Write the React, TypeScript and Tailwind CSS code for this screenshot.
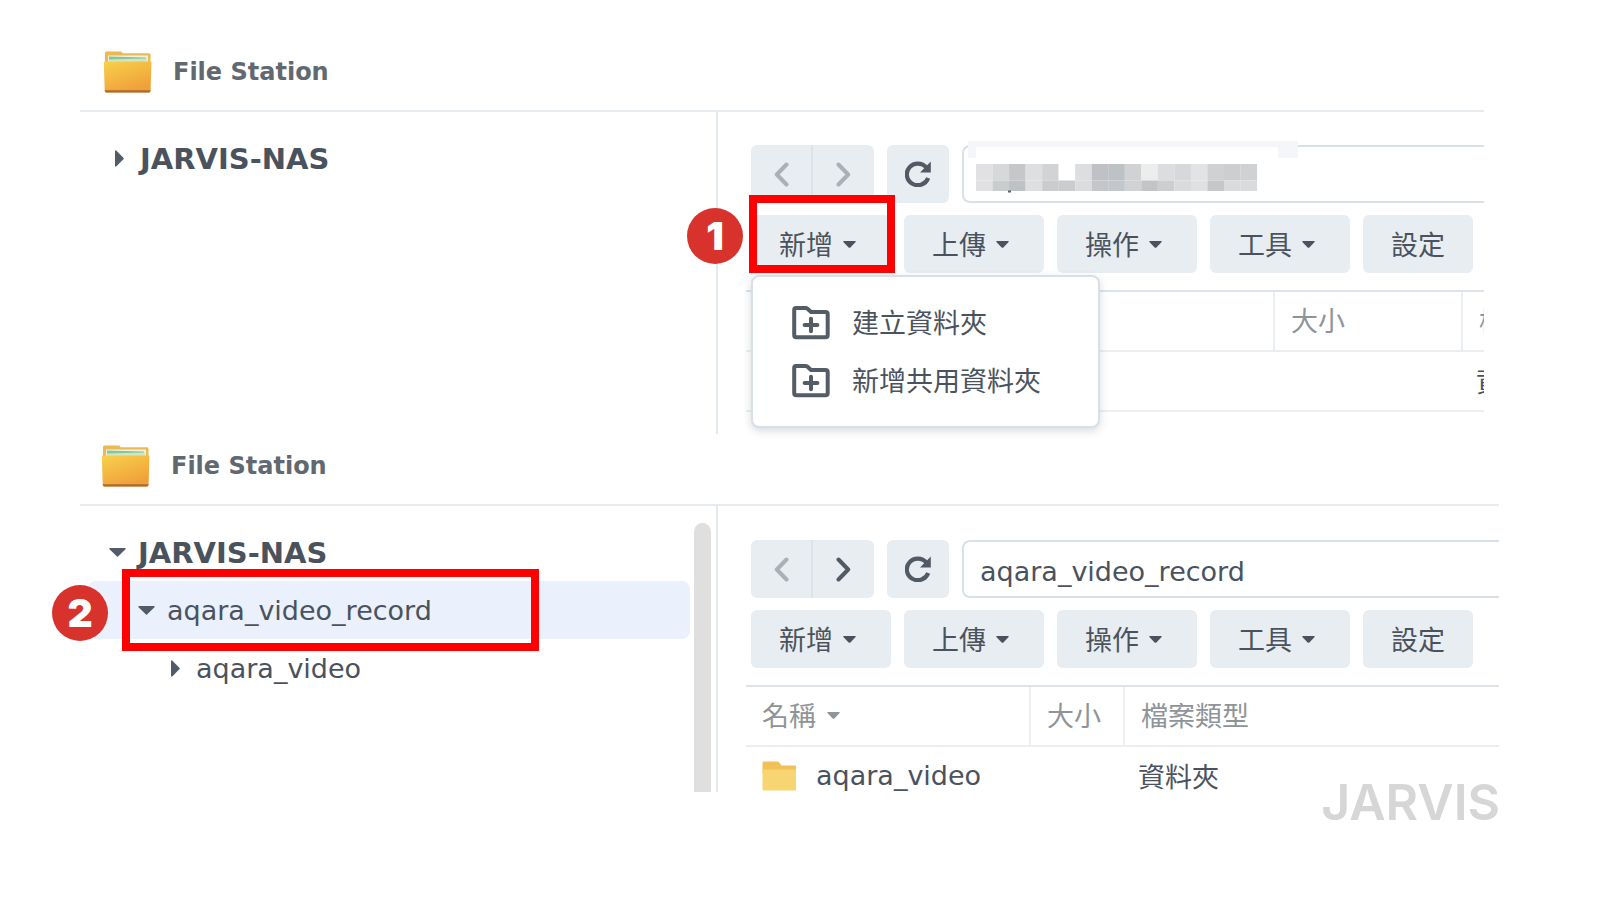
import type { ReactNode } from "react";

type CaretProps = { className?: string };

function CaretDown({ className = "" }: CaretProps) {
  return (
    <svg aria-hidden="true" viewBox="0 0 13 7" className={`h-[7px] w-[13px] shrink-0 ${className}`}>
      <path d="M0.8 0H12.2Q13.2 0.4 12.4 1.2L7.4 6.4Q6.5 7.2 5.6 6.4L0.6 1.2Q-0.2 0.4 0.8 0Z" fill="currentColor" />
    </svg>
  );
}

function TreeArrow({ open }: { open: boolean }) {
  return (
    <span className="flex w-[17px] shrink-0 justify-center text-[#525c66]">
      {open ? (
        <svg aria-hidden="true" viewBox="0 0 17 9" className="h-[9px] w-[17px]">
          <path d="M0.5 0H16.5V1.2L9 8.6Q8.5 9 8 8.6L0.5 1.2Z" fill="currentColor" />
        </svg>
      ) : (
        <svg aria-hidden="true" viewBox="0 0 9 17" className="h-[17px] w-[9px]">
          <path d="M0 0.5V16.5H1.2L8.6 9Q9 8.5 8.6 8L1.2 0.5Z" fill="currentColor" />
        </svg>
      )}
    </span>
  );
}

function Chevron({ direction }: { direction: "left" | "right" }) {
  return (
    <svg aria-hidden="true" viewBox="0 0 15 25" className="h-[25px] w-[15px]">
      <path
        d={direction === "left" ? "M12.5 2.5L2.8 12.5L12.5 22.5" : "M2.5 2.5L12.2 12.5L2.5 22.5"}
        fill="none"
        stroke="currentColor"
        strokeWidth="4"
        strokeLinecap="round"
        strokeLinejoin="round"
      />
    </svg>
  );
}

function RefreshIcon() {
  return (
    <svg aria-hidden="true" viewBox="0 0 26 26" className="size-[26px]">
      <path d="M23.2 17A11 10.8 0 1 1 21.4 6.6" fill="none" stroke="currentColor" strokeWidth="4.2" />
      <path d="M25.8 0.6V11.4H15Z" fill="currentColor" />
    </svg>
  );
}

function FolderPlusIcon() {
  return (
    <svg aria-hidden="true" viewBox="0 0 38 34" className="h-[34px] w-[38px] shrink-0 text-[#545d66]">
      <path
        d="M4 2H13.5Q14.6 2 15.5 2.8L19 6H33.5Q35.7 6 35.7 8.2V29Q35.7 31.3 33.5 31.3H4.4Q2.2 31.3 2.2 29V4Q2.2 2 4 2Z"
        fill="none"
        stroke="currentColor"
        strokeWidth="4"
      />
      <path d="M19 12.8V25.2M12.6 19H25.4" stroke="currentColor" strokeWidth="4" strokeLinecap="round" />
    </svg>
  );
}

function AppIcon({ id }: { id: string }) {
  return (
    <svg aria-hidden="true" viewBox="0 0 49 42" className="h-[42px] w-[49px] shrink-0">
      <defs>
        <linearGradient id={id} x1="0" y1="0" x2="0.5" y2="1">
          <stop offset="0" stopColor="#f8d14b" />
          <stop offset="1" stopColor="#f0a03a" />
        </linearGradient>
      </defs>
      <path d="M3.5 0.5H18Q19 0.5 19.5 2.2H46Q47.5 2.2 47.5 4V14H2V2Q2 0.5 3.5 0.5Z" fill="#ecb851" />
      <rect x="5" y="4.5" width="40" height="8" fill="#f3f1dc" />
      <path d="M6 5.5L43 6.5V12H6Z" fill="#86c79a" />
      <path d="M6 8.5L44 7.5V12H6Z" fill="#cfe6c4" />
      <path d="M1.5 10.5H47.5Q48.5 10.5 48.4 11.5L47.6 39.5Q47.5 41.5 46 41.5H3.2Q1.8 41.5 1.7 39.5L0.8 11.5Q0.8 10.5 1.5 10.5Z" fill={`url(#${id})`} />
      <path d="M1.7 39.3H47.6Q47.5 41.5 46 41.5H3.2Q1.8 41.5 1.7 39.3Z" fill="#a96a34" />
    </svg>
  );
}

function RowFolderIcon() {
  return (
    <svg aria-hidden="true" viewBox="0 0 34 30" className="h-[30px] w-[34px] shrink-0">
      <path d="M1.5 0.5H15.5Q16.5 0.5 17 1.2L19.5 4.5H33Q34 4.5 34 5.5V12H0.5V1.5Q0.5 0.5 1.5 0.5Z" fill="#f1c056" />
      <path d="M0.5 8.5H34V28.5Q34 29.5 33 29.5H1.5Q0.5 29.5 0.5 28.5Z" fill="#f8d573" />
    </svg>
  );
}

const topTiles = ["#e1e1e3", "#d7d8da", "#c6c7c9", "#dedfe1", "#d2d3d5", "#ffffff", "#dddee0", "#bfc1c4", "#bdc2c5", "#d1d2d4", "#eceeed", "#dcddde", "#d7d8db", "#e2e3e5", "#d0d1d3", "#cdced0", "#d0d1d3"];
const bottomTiles = ["#e1e1e3", "#cacdce", "#bdc2c5", "#dedfe1", "#cbccce", "#cbccce", "#dbdcde", "#c5c6c9", "#c3c6ca", "#d1d2d4", "#c3c4c6", "#cdced0", "#dadbdd", "#e0e1e3", "#c6c7c9", "#dadbdd", "#dadbdd"];

function PixelatedPath() {
  return (
    <svg aria-hidden="true" viewBox="0 0 330 52" className="pointer-events-none absolute -top-1 left-1.5 h-[52px] w-[330px]">
      <path d="M0 0H330V17H0Z" fill="#f5f6f9" />
      <path d="M8 6H310V50H8Z" fill="#ffffff" />
      {topTiles.map((fill, i) => (
        <rect key={`t${i}`} x={8 + i * 16.53} y="23" width="16.6" height="16.5" fill={fill} />
      ))}
      {bottomTiles.map((fill, i) => (
        <rect key={`b${i}`} x={8 + i * 16.53} y="39.5" width="16.6" height="10.5" fill={fill} />
      ))}
      <rect x="40" y="49.5" width="3" height="2" fill="#5a6068" />
    </svg>
  );
}

function StepBadge({ step, className }: { step: number; className: string }) {
  return (
    <span
      className={`absolute z-20 flex size-14 items-center justify-center rounded-full bg-[#d7322b] pb-0.5 font-[Inter,sans-serif] text-[39px] leading-none font-black text-white ${className}`}
    >
      {step}
    </span>
  );
}

function Panel({ id, headerPad, right, sidebar, children }: { id: string; headerPad: string; right: string; sidebar: ReactNode; children: ReactNode }) {
  return (
    <section className={right}>
      <header className={`flex h-[72px] items-center gap-[21px] border-b-2 border-[#e6ebef] pb-1.5 ${headerPad}`}>
        <AppIcon id={id} />
        <h2 className="text-[24px] leading-8 font-bold text-[#626870]">File Station</h2>
      </header>
      <div className="flex">
        <aside className="flex w-[638px] shrink-0 border-r-2 border-[#e4e9ed]">{sidebar}</aside>
        <div className="min-w-0 flex-1">{children}</div>
      </div>
    </section>
  );
}

function TreeRow({ label, open, className }: { label: string; open: boolean; className: string }) {
  return (
    <button type="button" aria-expanded={open} className={`flex h-[58px] w-full items-center gap-3 rounded-lg text-[#4a535d] ${className}`}>
      <TreeArrow open={open} />
      <span className="pt-0.5">{label}</span>
    </button>
  );
}

function NavBar({ forward, children }: { forward: boolean; children: ReactNode }) {
  return (
    <div className="flex gap-[13px]">
      <div className="flex h-[58px] overflow-hidden rounded-md bg-[#e8edf1]">
        <button type="button" aria-label="上一頁" disabled className="flex w-[60px] items-center justify-center text-[#aab0b5]">
          <Chevron direction="left" />
        </button>
        <button
          type="button"
          aria-label="下一頁"
          disabled={!forward}
          className={`flex w-[63px] items-center justify-center border-l-2 border-[#dce3e9] ${forward ? "text-[#525b65]" : "text-[#aab0b5]"}`}
        >
          <Chevron direction="right" />
        </button>
      </div>
      <button type="button" aria-label="重新整理" className="flex h-[58px] w-[62px] items-center justify-center rounded-md bg-[#e8edf1] text-[#525b65]">
        <RefreshIcon />
      </button>
      <div className="relative min-w-0 flex-1">{children}</div>
    </div>
  );
}

function PathInput({ value }: { value: string }) {
  return (
    <input
      aria-label="路徑"
      defaultValue={value}
      className="h-[58px] w-full rounded-l-lg border-2 border-r-0 border-[#dae0e7] bg-white pt-1 pl-4 text-[27px] text-[#4a535d] outline-none"
    />
  );
}

function ToolButton({ label }: { label: string }) {
  return (
    <button type="button" className="flex h-[58px] w-[140px] items-center gap-2.5 rounded-md bg-[#e8edf1] pl-7 text-[#4a535d]">
      <span className="pt-1">{label}</span>
      <CaretDown />
    </button>
  );
}

function ToolBar({ overlay }: { overlay?: ReactNode }) {
  return (
    <div className="mt-3 flex gap-[13px]">
      <div className="relative">
        <ToolButton label="新增" />
        {overlay}
      </div>
      <ToolButton label="上傳" />
      <ToolButton label="操作" />
      <ToolButton label="工具" />
      <button type="button" className="h-[58px] rounded-md bg-[#e8edf1] px-7 pt-1 text-[#4a535d]">
        設定
      </button>
    </div>
  );
}

function FileTable({ widths, name }: { widths: [string, string]; name?: string }) {
  const head = "h-[60px] pt-0.5 pl-4 text-left font-normal text-[#8f9498]";
  return (
    <table className="w-full table-fixed border-separate border-spacing-0 border-t-2 border-[#dde3e9] whitespace-nowrap">
      <thead>
        <tr>
          <th scope="col" className={`${head} ${widths[0]} border-r-2 border-b-2 border-[#ebeff2]`}>
            <span className="flex items-center gap-[11px]">
              名稱
              <CaretDown className="mb-1" />
            </span>
          </th>
          <th scope="col" className={`${head} ${widths[1]} border-r-2 border-b-2 border-[#ebeff2]`}>大小</th>
          <th scope="col" className={`${head} border-b-2 border-[#ebeff2]`}>檔案類型</th>
        </tr>
      </thead>
      <tbody>
        <tr className="text-[#4a535d]">
          <td className="h-[60px] border-b-2 border-[#ebeff2] pl-4">
            {name && (
              <span className="flex items-center gap-5">
                <RowFolderIcon />
                {name}
              </span>
            )}
          </td>
          <td className="border-b-2 border-[#ebeff2]" />
          <td className="border-b-2 border-[#ebeff2] pt-1 pl-[13px]">資料夾</td>
        </tr>
      </tbody>
    </table>
  );
}

function CreateMenu() {
  return (
    <>
      <div className="absolute top-full left-0 z-10 mt-0.5 w-[349px] rounded-lg border-2 border-[#d9dfe7] bg-white pt-[17px] pb-4 shadow-[0_3px_8px_rgba(60,75,95,0.2)]">
        {["建立資料夾", "新增共用資料夾"].map((label) => (
          <button key={label} type="button" className="flex h-[58px] w-full items-center gap-[22px] pl-[39px] text-[#4a535d]">
            <FolderPlusIcon />
            <span className="pt-0.5">{label}</span>
          </button>
        ))}
      </div>
      <div className="pointer-events-none absolute -top-5 -right-1 bottom-0 -left-0.5 z-20 border-8 border-[#fe0000]" />
      <StepBadge step={1} className="-top-[7px] -left-16" />
    </>
  );
}

export default function App() {
  return (
    <main className="min-h-screen bg-white pt-10 pb-16 pl-20 font-['DejaVu_Sans','Noto_Sans_CJK_TC',sans-serif] text-[27px] leading-9">
      <Panel
        id="folder-a"
        headerPad="pl-[23px]"
        right="mr-[116px]"
        sidebar={
          <nav aria-label="JARVIS-NAS" className="flex-1 pt-[17px] pl-2">
            <TreeRow label="JARVIS-NAS" open={false} className="pl-[23px] text-[29px] font-bold" />
          </nav>
        }
      >
        <div className="pt-[33px] pl-[33px]">
          <NavBar forward={false}>
            <PathInput value="" />
            <PixelatedPath />
          </NavBar>
          <ToolBar overlay={<CreateMenu />} />
        </div>
        <div className="mt-[17px] mb-[22px] ml-7 overflow-hidden">
          <FileTable widths={["w-[529px]", "w-[188px]"]} />
        </div>
      </Panel>

      <div className="relative">
        <Panel
          id="folder-b"
          headerPad="pl-[21px]"
          right="mr-[101px]"
          sidebar={
            <>
              <nav aria-label="JARVIS-NAS aqara" className="flex-1 pt-[17px] pl-2">
                <TreeRow label="JARVIS-NAS" open className="pl-[21px] text-[29px] font-bold" />
                <div className="relative">
                  <TreeRow label="aqara_video_record" open className="bg-[#eaf1fc] pl-[50px]" />
                  <div className="pointer-events-none absolute -top-3 -bottom-3 left-[34px] w-[417px] border-8 border-[#fe0000]" />
                  <StepBadge step={2} className="top-1 -left-9" />
                </div>
                <TreeRow label="aqara_video" open={false} className="pl-[79px]" />
              </nav>
              <div className="mt-[17px] mr-[5px] ml-1 w-[17px] rounded-t-full bg-[#dfdfdf]" />
            </>
          }
        >
          <div className="pt-[34px] pl-[33px]">
            <NavBar forward>
              <PathInput value="aqara_video_record" />
            </NavBar>
            <ToolBar />
          </div>
          <div className="mt-[17px] ml-7 h-[107px] overflow-hidden">
            <FileTable widths={["w-[285px]", "w-[94px]"]} name="aqara_video" />
          </div>
        </Panel>
        <p className="absolute right-[100px] -bottom-10 font-[Inter,sans-serif] text-[50px] leading-[60px] font-semibold text-[#d6d6d6]">JARVIS</p>
      </div>
    </main>
  );
}
